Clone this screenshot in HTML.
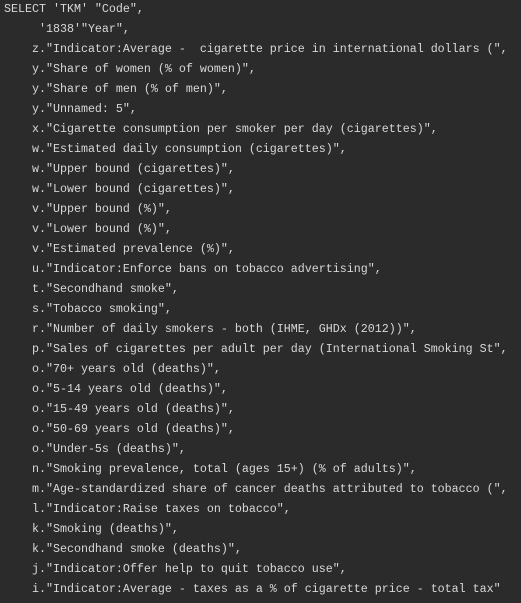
<!DOCTYPE html>
<html><head><meta charset="utf-8"><style>
html,body{margin:0;padding:0;background:#2b2b2b;width:521px;height:603px;overflow:hidden}
pre{margin:0;padding:0 0 0 4px;font-family:"Liberation Mono",monospace;font-size:11.67px;line-height:20px;color:#d8d8d8;position:relative;top:-1px;white-space:pre}
</style></head><body><pre>SELECT 'TKM' "Code",
     '1838'"Year",
    z."Indicator:Average -  cigarette price in international dollars (",
    y."Share of women (% of women)",
    y."Share of men (% of men)",
    y."Unnamed: 5",
    x."Cigarette consumption per smoker per day (cigarettes)",
    w."Estimated daily consumption (cigarettes)",
    w."Upper bound (cigarettes)",
    w."Lower bound (cigarettes)",
    v."Upper bound (%)",
    v."Lower bound (%)",
    v."Estimated prevalence (%)",
    u."Indicator:Enforce bans on tobacco advertising",
    t."Secondhand smoke",
    s."Tobacco smoking",
    r."Number of daily smokers - both (IHME, GHDx (2012))",
    p."Sales of cigarettes per adult per day (International Smoking St",
    o."70+ years old (deaths)",
    o."5-14 years old (deaths)",
    o."15-49 years old (deaths)",
    o."50-69 years old (deaths)",
    o."Under-5s (deaths)",
    n."Smoking prevalence, total (ages 15+) (% of adults)",
    m."Age-standardized share of cancer deaths attributed to tobacco (",
    l."Indicator:Raise taxes on tobacco",
    k."Smoking (deaths)",
    k."Secondhand smoke (deaths)",
    j."Indicator:Offer help to quit tobacco use",
    i."Indicator:Average - taxes as a % of cigarette price - total tax"</pre></body></html>
